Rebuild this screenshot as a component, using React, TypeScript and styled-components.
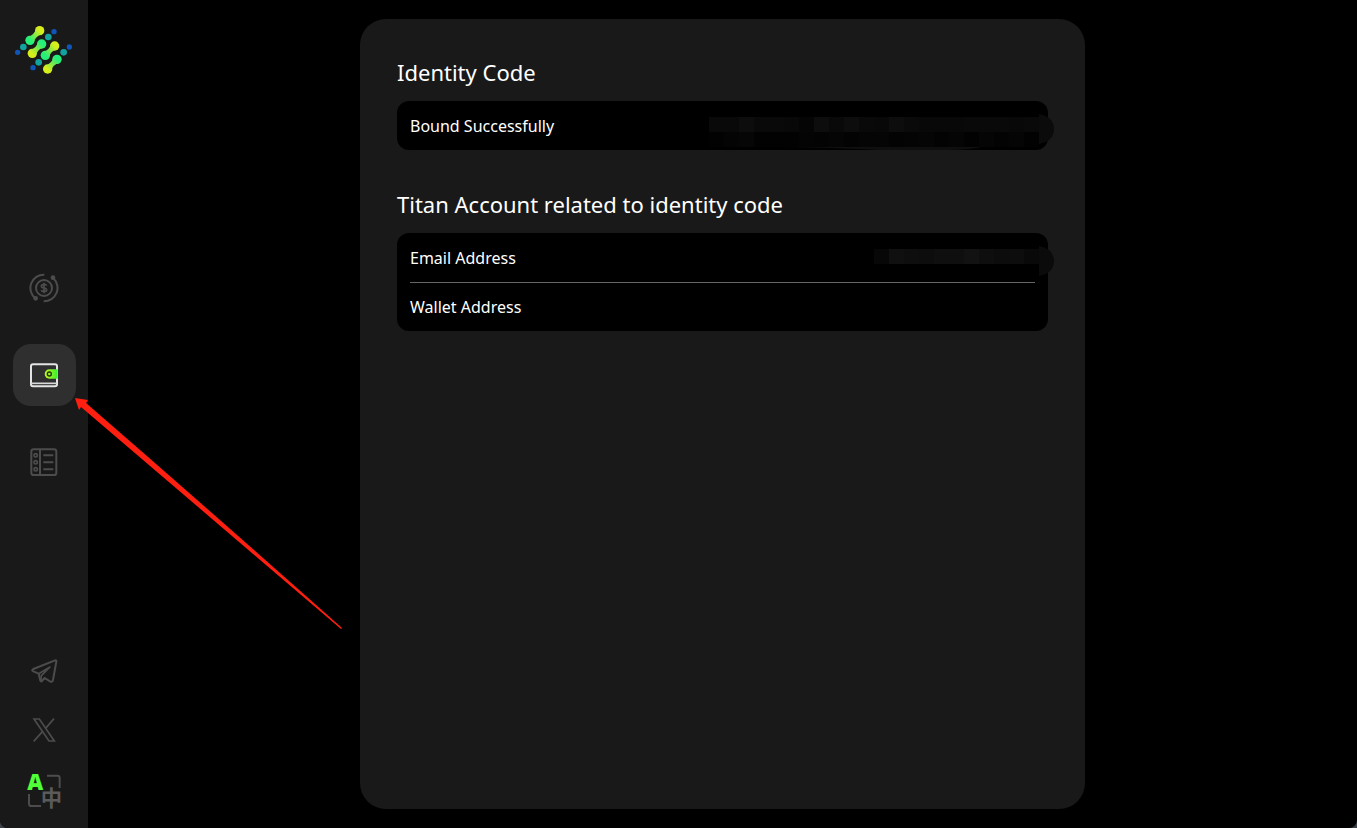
import React from "react";
import styled, { createGlobalStyle } from "styled-components";

const GlobalStyle = createGlobalStyle`
  html { background: #3c424a; }
  body { margin: 0; }
  *, *::before, *::after { box-sizing: border-box; }
`;

const Shell = styled.div`
  position: relative;
  display: flex;
  min-height: 100vh;
  overflow: hidden;
  border-radius: 0 0 8px 8px;
  background: #000;
  color: #fff;
  font-family: "Noto Sans", "Open Sans", sans-serif;
`;

const Sidebar = styled.aside`
  display: flex;
  flex: none;
  flex-direction: column;
  align-items: center;
  width: 88px;
  padding: 18px 0 7px;
  background: #191919;
`;

const LogoLink = styled.a`
  display: grid;
  place-items: center;
  width: 62px;
  height: 62px;
`;

const Nav = styled.nav`
  display: flex;
  flex: 1;
  flex-direction: column;
  justify-content: center;
  gap: 25px;
  padding-top: 29px;
`;

const NavButton = styled.button<{ $active?: boolean }>`
  display: grid;
  place-items: center;
  width: 63px;
  height: 62px;
  padding: 0;
  border: 0;
  border-radius: 18px;
  background: ${(p) => (p.$active ? "#2f2f2f" : "transparent")};
  color: #4c4c4c;
  cursor: pointer;
`;

const Footer = styled.div`
  display: flex;
  flex-direction: column;
  align-items: center;
`;

const FooterLink = styled.a`
  display: grid;
  place-items: center;
  width: 60px;
  height: 60px;
  color: #4c4c4c;
`;

const LanguageButton = styled.button`
  display: grid;
  place-items: center;
  width: 60px;
  height: 60px;
  padding: 0;
  border: 0;
  background: none;
  color: #4c4c4c;
  cursor: pointer;
`;

const Main = styled.main`
  display: flex;
  flex: 1;
  justify-content: center;
  min-width: 0;
  padding: 19px;
`;

const Panel = styled.div`
  display: flex;
  flex-direction: column;
  gap: 38px;
  width: 100%;
  max-width: 725px;
  padding: 37px;
  border-radius: 26px;
  background: #191919;
`;

const Section = styled.section`
  display: flex;
  flex-direction: column;
  gap: 12px;
`;

const Heading = styled.h2`
  margin: 0;
  font-size: 22px;
  font-weight: 400;
  line-height: 33px;
`;

const Card = styled.dl`
  margin: 0;
  padding: 0 13px;
  border-radius: 12px;
  background: #000;
`;

const Row = styled.div`
  display: flex;
  align-items: center;
  justify-content: space-between;
  height: 49px;

  & + & {
    border-top: 1px solid #666;
  }
`;

const Label = styled.dt`
  font-size: 16px;
  line-height: 24px;
`;

const Value = styled.dd`
  display: flex;
  margin: 0 -19px 0 0;
`;

const Arrow = styled.svg`
  position: absolute;
  top: 397px;
  left: 75px;
  pointer-events: none;
`;

const BLOCK = 15;

function Mosaic({ rows, smear }: { rows: string[][]; smear?: string }) {
  const width = rows[0].length * BLOCK;
  return (
    <svg width={width + BLOCK} height={48} aria-label="Hidden value" role="img">
      {smear && <path d={smear} fill="#0f0f0f" />}
      {rows.map((row, y) =>
        row.map((fill, x) => (
          <rect key={`${x}-${y}`} x={x * BLOCK} y={15 + y * BLOCK} width={BLOCK} height={BLOCK} fill={fill} />
        ))
      )}
      <path d={`M${width} 12Q${width + 15} 15 ${width + 15} 27Q${width + 15} 39 ${width} 42Z`} fill="#0b0b0b" />
    </svg>
  );
}

const codeBlocks = [
  ["#090909", "#090909", "#0d0d0d", "#090909", "#090909", "#080808", "#050505", "#0d0d0d", "#090909", "#0d0d0d", "#090909", "#080808", "#0d0d0d", "#0a0a0a", "#080808", "#080808", "#080808", "#090909", "#090909", "#090909", "#080808", "#090909"],
  ["#020202", "#040404", "#060606", "#020202", "#020202", "#020202", "#040404", "#030303", "#050505", "#030303", "#050505", "#050505", "#030303", "#040404", "#050505", "#030303", "#050505", "#020202", "#050505", "#030303", "#050505", "#020202"],
];

const emailBlocks = [
  ["#070707", "#101010", "#0e0e0e", "#0d0d0d", "#0f0f0f", "#0f0f0f", "#121212", "#0e0e0e", "#0c0c0c", "#0d0d0d", "#090909"],
];

function Logo() {
  const bars = [
    [119, 62, 90, 91],
    [97, 130, 125, 102],
    [164, 108, 136, 136],
    [143, 177, 171, 148],
  ];
  return (
    <svg width="60" height="54" viewBox="42 36 180 162" aria-hidden="true">
      <defs>
        {bars.map(([x1, y1, x2, y2], i) => (
          <linearGradient key={i} id={`bar${i}`} gradientUnits="userSpaceOnUse" x1={x1} y1={y1} x2={x2} y2={y2}>
            <stop offset="0" stopColor="#d6ee1c" />
            <stop offset="0.5" stopColor="#7fe84a" />
            <stop offset="1" stopColor="#25ef78" />
          </linearGradient>
        ))}
      </defs>
      {bars.map(([x1, y1, x2, y2], i) => {
        const mx = (x1 + x2) / 2;
        const my = (y1 + y2) / 2;
        const s = (x2 - x1) * (y2 - y1) < 0 ? 1 : -1;
        return (
          <g key={i} fill={`url(#bar${i})`}>
            <circle cx={x1} cy={y1} r="14" />
            <circle cx={x2} cy={y2} r="14" />
            <path
              d={`M${x1 - 9} ${y1 - 9 * s}Q${mx - 1} ${my - s} ${x2 - 9} ${y2 - 9 * s}L${x2 + 9} ${y2 + 9 * s}Q${mx + 1} ${my + s} ${x1 + 9} ${y1 + 9 * s}Z`}
            />
          </g>
        );
      })}
      <g fill="#12a39f">
        <circle cx="145" cy="81" r="10" />
        <circle cx="70" cy="111" r="10" />
        <circle cx="191" cy="127" r="10" />
        <circle cx="116" cy="157" r="10" />
      </g>
      <g fill="#0f56b8">
        <circle cx="162" cy="65" r="8" />
        <circle cx="53" cy="127" r="8" />
        <circle cx="208" cy="111" r="8" />
        <circle cx="99" cy="173" r="8" />
      </g>
    </svg>
  );
}

function CoinIcon() {
  return (
    <svg width="30" height="30" viewBox="0 0 90 90" fill="none" stroke="currentColor" strokeWidth="6" aria-hidden="true">
      <path d="M46 5A40 40 0 0 0 19 76M72 15A40 40 0 0 1 44 85" />
      <circle cx="45" cy="45" r="24" />
      <circle cx="20" cy="76" r="7" fill="currentColor" stroke="none" />
      <circle cx="72" cy="14" r="7" fill="currentColor" stroke="none" />
      <path d="M53 38Q52 34 45 34Q37 34 37 39Q37 44 45 45Q53 46 53 51Q53 56 45 56Q38 56 37 51M45 29V61" strokeWidth="5" />
    </svg>
  );
}

function WalletIcon() {
  return (
    <svg width="30" height="30" viewBox="0 0 90 90" fill="none" aria-hidden="true">
      <defs>
        <linearGradient id="clasp" x1="0" x2="1" y1="0" y2="0">
          <stop offset="0" stopColor="#c3f51c" />
          <stop offset="1" stopColor="#36f032" />
        </linearGradient>
      </defs>
      <rect x="6" y="13" width="78" height="66" rx="6" stroke="#e4e4e4" strokeWidth="6" />
      <path d="M6 70H84" stroke="#d8d8d8" strokeWidth="5" />
      <path d="M86 28H61A14 14 0 0 0 61 56H86Z" fill="url(#clasp)" />
      <circle cx="61" cy="42" r="6" stroke="#26340c" strokeWidth="4" />
    </svg>
  );
}

function ListIcon() {
  return (
    <svg width="30" height="30" viewBox="0 0 90 90" fill="none" stroke="currentColor" strokeWidth="6" aria-hidden="true">
      <rect x="7" y="7" width="75" height="77" rx="7" />
      <path d="M33 7V84M43 25H73M43 46H73M43 67H73" />
      <circle cx="20" cy="25" r="5" strokeWidth="5" />
      <circle cx="20" cy="46" r="5" strokeWidth="5" />
      <circle cx="20" cy="67" r="5" strokeWidth="5" />
    </svg>
  );
}

function TelegramIcon() {
  return (
    <svg width="30" height="30" viewBox="0 0 90 90" fill="none" stroke="currentColor" strokeWidth="6" strokeLinejoin="round" strokeLinecap="round" aria-hidden="true">
      <path d="M78 13L13 39Q6 43 13 46L29 53L34 74Q36 79 40 74L47 66L63 76Q70 80 72 72L82 17Q83 11 78 13Z" />
      <path d="M36 74L37 59L63 33L29 53" strokeWidth="5" />
    </svg>
  );
}

function XIcon() {
  return (
    <svg width="30" height="30" viewBox="0 0 90 90" fill="none" stroke="currentColor" strokeWidth="5" aria-hidden="true">
      <path d="M15 9H31L76 75H60Z" />
      <path d="M75 8L49 38M14 76L41 46" />
    </svg>
  );
}

function LanguageIcon() {
  return (
    <svg width="60" height="60" viewBox="-36 -36 180 180" fill="none" aria-hidden="true">
      <path d="M63 8H94Q101 8 101 15V45M9 63V92Q9 99 16 99H45" stroke="currentColor" strokeWidth="6" />
      <text x="28" y="50" fill="#50ff38" fontFamily='"Open Sans", sans-serif' fontSize="66" fontWeight="800" textAnchor="middle">
        A
      </text>
      <text x="76" y="98" fill="#5a5a5a" fontFamily='"Noto Sans CJK SC", sans-serif' fontSize="64" fontWeight="700" textAnchor="middle">
        中
      </text>
    </svg>
  );
}

export default function App() {
  return (
    <>
      <GlobalStyle />
      <Shell>
        <Sidebar>
          <LogoLink href="#" aria-label="Home">
            <Logo />
          </LogoLink>
          <Nav aria-label="Main">
            <NavButton type="button" aria-label="Earnings">
              <CoinIcon />
            </NavButton>
            <NavButton type="button" aria-label="Wallet" aria-current="page" $active>
              <WalletIcon />
            </NavButton>
            <NavButton type="button" aria-label="Nodes">
              <ListIcon />
            </NavButton>
          </Nav>
          <Footer>
            <FooterLink href="#telegram" aria-label="Telegram">
              <TelegramIcon />
            </FooterLink>
            <FooterLink href="#x" aria-label="X">
              <XIcon />
            </FooterLink>
            <LanguageButton type="button" aria-label="Change language">
              <LanguageIcon />
            </LanguageButton>
          </Footer>
        </Sidebar>
        <Main>
          <Panel>
            <Section>
              <Heading>Identity Code</Heading>
              <Card>
                <Row>
                  <Label>Bound Successfully</Label>
                  <Value>
                    <Mosaic rows={codeBlocks} smear="M71 44H278Q260 48 240 48H170Q110 45 71 45Z" />
                  </Value>
                </Row>
              </Card>
            </Section>
            <Section>
              <Heading>Titan Account related to identity code</Heading>
              <Card>
                <Row>
                  <Label>Email Address</Label>
                  <Value>
                    <Mosaic rows={emailBlocks} />
                  </Value>
                </Row>
                <Row>
                  <Label>Wallet Address</Label>
                </Row>
              </Card>
            </Section>
          </Panel>
        </Main>
        <Arrow width="268" height="234" viewBox="0 0 268 234" aria-hidden="true">
          <path d="M0 1L13 3L11 6Q139 117 267 231L266 232L6 10L4 13Z" fill="#ff1f10" />
        </Arrow>
      </Shell>
    </>
  );
}
